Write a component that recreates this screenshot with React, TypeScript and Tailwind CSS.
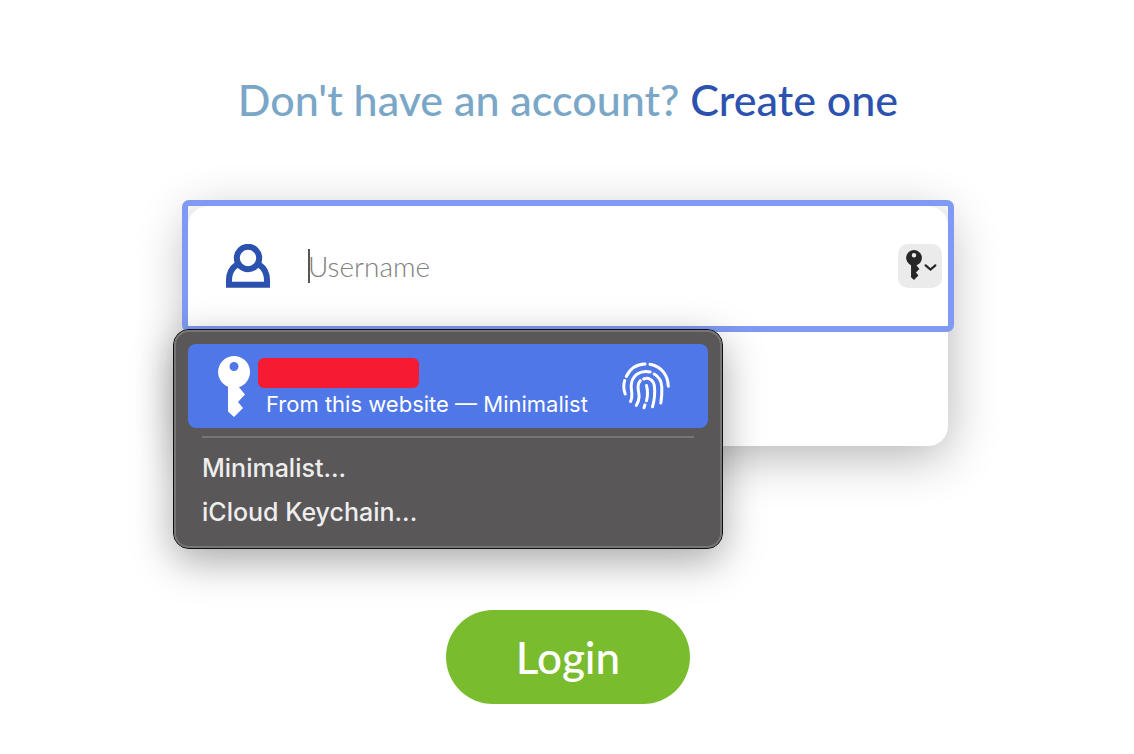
import React, { useState } from 'react';

interface IconProps {
  className?: string;
}

const UserIcon: React.FC<IconProps> = ({ className }) => (
  <svg viewBox="0 0 44 44" className={className} fill="none" stroke="currentColor" strokeWidth="6" aria-hidden="true">
    <circle cx="22" cy="14" r="11.2" />
    <path d="M11 20.500C6 24 3 30 3 36V40.800H41V36C41 30 38 24 33 20.500" />
  </svg>
);

const KeyIcon: React.FC<IconProps> = ({ className }) => (
  <svg viewBox="0 0 32 61" className={className} fill="currentColor" aria-hidden="true">
    <path
      fillRule="evenodd"
      d="M16 0A16 16 0 0 1 21 31.200L27 38.500L20 46L25 52L16 61L10 55.500V30.800A16 16 0 0 1 16 0ZM16 6A4.500 4.500 0 1 0 16 15A4.500 4.500 0 1 0 16 6Z"
    />
  </svg>
);

const FingerprintIcon: React.FC<IconProps> = ({ className }) => (
  <svg
    viewBox="0 0 48 48"
    className={className}
    fill="none"
    stroke="currentColor"
    strokeWidth="3"
    strokeLinecap="round"
    aria-hidden="true"
  >
    <path d="M4.300 14.500C8 6.800 14.500 2.300 23 2" />
    <path d="M28 2.300C39 4.300 46 12.800 46.300 24.300" />
    <path d="M2.700 18.500C1.300 23 1.500 27.500 3.200 32" />
    <path d="M8.500 39.500C11.500 33.500 9 29.500 9.200 23.500C9.800 13.500 18.500 7.500 28.200 10" />
    <path d="M32.200 12C37.500 15 39.500 19.500 39.800 25C40 30.500 39.800 36 38.800 41" />
    <path d="M14.300 43.500C18 37 17.300 33.500 16.300 28C15.700 24.500 16 21.300 18.300 18.700" />
    <path d="M21.700 17C26.500 15 31.500 18 32.300 23.500C33.200 30.500 32.500 38 30.500 44.800" />
    <path d="M24.500 23.500C25.800 28.500 25.800 34 24.500 38.800" />
    <path d="M23 42.800L22 45.800" />
  </svg>
);

const ChevronIcon: React.FC<IconProps> = ({ className }) => (
  <svg viewBox="0 0 12 8" className={className} fill="none" stroke="currentColor" strokeWidth="2" strokeLinecap="round" aria-hidden="true">
    <path d="M1.500 2L6 6L10.500 2" />
  </svg>
);

const managers = ['Minimalist...', 'iCloud Keychain...'];

const KeychainMenu: React.FC<{ onPick: () => void }> = ({ onPick }) => (
  <div
    role="menu"
    className="absolute top-[123px] -left-[15px] z-20 w-[550px] max-w-full rounded-2xl border border-[#111] bg-[#595758] font-['Inter',sans-serif] shadow-[0_12px_40px_rgba(0,0,0,0.35)]"
  >
    <div className="rounded-[15px] border-2 border-[#777576] px-3 pt-3 pb-3">
      <button
        type="button"
        role="menuitem"
        onClick={onPick}
        className="flex h-[84px] w-full items-center rounded-lg bg-[#4f77e8] pr-[38px] pl-[30px] text-left text-white"
      >
        <KeyIcon className="h-[61px] w-8 shrink-0" />
        <span className="ml-2 flex flex-1 flex-col pt-1.5">
          <span className="h-[30px] w-[161px] rounded-md bg-[#f61a33]" />
          <span className="pl-2 text-[22px] leading-8 whitespace-nowrap">From this website — Minimalist</span>
        </span>
        <FingerprintIcon className="size-12 shrink-0" />
      </button>
      <hr className="mx-3.5 my-2 border-t-2 border-[#777576]" />
      {managers.map((name) => (
        <button
          key={name}
          type="button"
          role="menuitem"
          onClick={onPick}
          className="block h-11 w-full px-3.5 text-left text-[25px] leading-[44px] font-medium text-[#eeeeee]"
        >
          {name}
        </button>
      ))}
    </div>
  </div>
);

export default function App() {
  const [menuOpen, setMenuOpen] = useState(true);
  const [username, setUsername] = useState('');

  return (
    <main className="flex min-h-screen flex-col items-center bg-white pt-[70px] pb-12 pl-0.5 font-['Lato',sans-serif]">
      <p className="text-[43px] leading-[60px] font-medium text-[#7aa7c7]">
        Don't have an account?{' '}
        <a href="#create" className="text-[#2c52b0]">
          Create one
        </a>
      </p>

      <form className="mt-[76px] flex w-full flex-col items-center" onSubmit={(e) => e.preventDefault()}>
        <div className="relative w-full max-w-[760px] rounded-[20px] bg-white shadow-[0_10px_50px_rgba(0,0,0,0.3)]">
          <div className="relative flex h-[120px] items-center rounded-[1px] pr-1.5 pl-[38px] outline-[6px] outline-[#809af3]">
            <label htmlFor="username" aria-label="Username" className="text-[#2c52b0]">
              <UserIcon className="size-11" />
            </label>
            <div className="relative ml-[38px] flex-1">
              <input
                id="username"
                type="text"
                value={username}
                onChange={(e) => setUsername(e.target.value)}
                placeholder="Username"
                className="w-full bg-transparent text-[28px] leading-9 font-light text-[#444] outline-none placeholder:text-[#808080]"
              />
              {!username && <span className="absolute top-px left-0 h-[34px] w-0.5 bg-[#555]" />}
            </div>
            <button
              type="button"
              aria-label="Saved passwords"
              onClick={() => setMenuOpen(!menuOpen)}
              className="flex size-11 items-center justify-center gap-0.5 rounded-[10px] bg-[#ebebeb] pl-0.5 text-[#262626]"
            >
              <KeyIcon className="mb-0.5 h-[30px] w-4" />
              <ChevronIcon className="mt-0.5 h-[9px] w-[13px]" />
            </button>
          </div>
          <input
            type="password"
            aria-label="Password"
            className="block h-[120px] w-full rounded-b-[20px] bg-transparent px-[114px] text-[28px] font-light outline-none"
          />
          {menuOpen && <KeychainMenu onPick={() => setMenuOpen(false)} />}
        </div>

        <button
          type="submit"
          className="mt-[164px] h-[94px] w-[244px] rounded-full bg-[#79bd2f] text-[44px] leading-[60px] font-medium text-white"
        >
          Login
        </button>
      </form>
    </main>
  );
}
